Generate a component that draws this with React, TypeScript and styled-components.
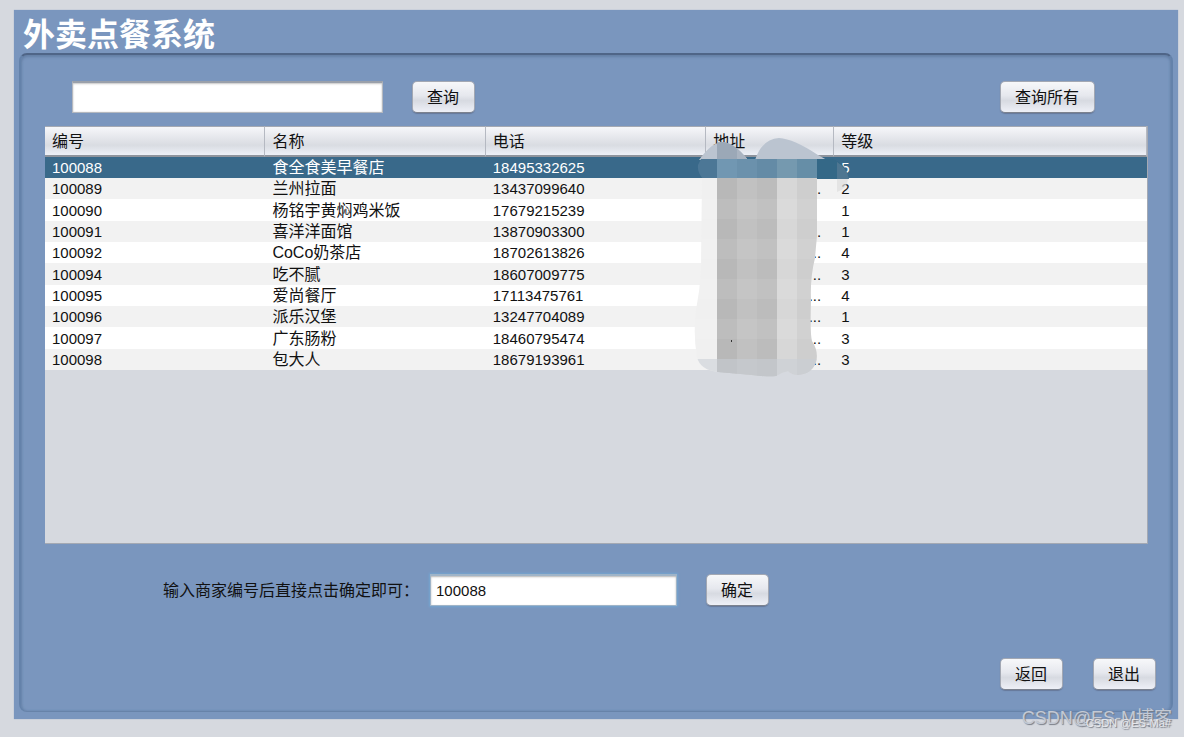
import React, { useState } from "react";
import styled, { createGlobalStyle, css } from "styled-components";

const GlobalStyle = createGlobalStyle`
  * { box-sizing: border-box; }
  body {
    margin: 0;
    background: #d6d9df;
    color: #111;
    font: 16px/20px "Liberation Sans", "Noto Sans CJK SC", sans-serif;
  }
`;

const Page = styled.div`
  position: relative;
  min-height: 100vh;
  padding: 10px 6px 18px 14px;
  display: flex;
`;

const Window = styled.main`
  flex: 1;
  display: flex;
  flex-direction: column;
  padding: 0 5px 7px;
  background: #7a96be;
  box-shadow: 0 0 1px #8fa6ca;
`;

const Title = styled.h1`
  margin: 0;
  padding: 3px 4px 0;
  height: 43px;
  color: #fff;
  font-size: 32px;
  line-height: 44px;
  font-weight: 700;
`;

const Panel = styled.section`
  flex: 1;
  display: flex;
  flex-direction: column;
  padding: 26px 23px 21px 24px;
  border: 2px solid #6482aa;
  border-top-color: #4f6587;
  border-bottom: 1px solid #6783a9;
  border-radius: 8px;
  box-shadow: inset 0 2px 3px #6580a6, inset 1px 0 2px #6d89b0, inset -1px 0 2px #6d89b0;
`;

const Bar = styled.form`
  display: flex;
  align-items: center;
  height: 32px;
  gap: 29px;
`;

const SearchBar = styled(Bar)`
  padding: 0 53px 0 27px;
  margin-bottom: 13px;
`;

const ConfirmBar = styled(Bar)`
  margin-top: 30px;
  padding-left: 118px;
`;

const Field = styled.div`
  display: flex;
  align-items: center;
  gap: 11px;
`;

const ActionBar = styled.div`
  display: flex;
  justify-content: flex-end;
  gap: 30px;
  margin: auto -8px 0 0;
`;

const Label = styled.label`
  padding-top: 2px;
  white-space: nowrap;
`;

const TextBox = styled.input<{ $width: number; $active?: boolean }>`
  width: ${(p) => p.$width}px;
  height: 32px;
  padding: 0 5px;
  border: 1px solid #b4b8bf;
  border-top: 2px solid #9aa0aa;
  background: #fff;
  color: #111;
  font: 15px/20px "Liberation Sans", "Noto Sans CJK SC", sans-serif;
  box-shadow: inset 0 1px 2px #c8c8c8, inset 0 0 1px #b8b8b8;
  outline: none;
  ${(p) =>
    p.$active &&
    css`
      border-color: #9fb4c8;
      box-shadow: inset 0 1px 2px #b5b5b5, 0 0 2px 1px #73a4d1;
    `}
`;

const Button = styled.button<{ $end?: boolean }>`
  height: 32px;
  padding: 2px 15px 0 14px;
  border: 1px solid #a3a8b3;
  border-bottom-color: #7c828e;
  border-radius: 5px;
  background: linear-gradient(#f7f8fa, #e6e8ee 45%, #d7dae1 62%, #eef0f7);
  box-shadow: 0 1px 1px #66789a;
  color: #111;
  font: 16px/20px "Liberation Sans", "Noto Sans CJK SC", sans-serif;
  white-space: nowrap;
  ${(p) => p.$end && "margin-left: auto;"}
`;

const TableArea = styled.div`
  position: relative;
  height: 418px;
  background: #d6d9df;
  border: 1px solid #a4a9b3;
  border-top: 0;
  border-left: 0;
`;

const Table = styled.table`
  width: 100%;
  table-layout: fixed;
  border-collapse: separate;
  border-spacing: 0;
`;

const Col = styled.col<{ $share?: string }>`
  width: ${(p) => p.$share ?? "auto"};
`;

const HeadCell = styled.th`
  height: 31px;
  padding: 2px 7px 0;
  text-align: left;
  font-weight: 400;
  border-top: 1px solid #a4a9b3;
  border-bottom: 2px solid #8f949d;
  border-right: 1px solid #b5b9c2;
  background: linear-gradient(#f6f7fa, #e2e4e9 45%, #d9dce2 65%, #edf0f7);
`;

const Row = styled.tr<{ $selected: boolean }>`
  height: 21px;
  background: #fff;
  &:nth-child(even) { background: #f2f2f2; }
  &:nth-child(3n) { height: 22px; }
  ${(p) => p.$selected && "background: #39698a; color: #fff;"}
`;

const Cell = styled.td<{ $numeric?: boolean }>`
  padding: 1px 8px 0 7px;
  line-height: 20px;
  font-size: ${(p) => (p.$numeric ? 15 : 16)}px;
  white-space: nowrap;
  overflow: hidden;
`;

const AddressCell = styled(Cell)`
  text-align: right;
  padding-right: 13px;
`;

const Mosaic = styled.svg`
  position: absolute;
  left: 645px;
  top: 4px;
  width: 170px;
  height: 257px;
`;

const Watermark = styled.div<{ $small?: boolean }>`
  position: absolute;
  right: ${(p) => (p.$small ? 13 : 12)}px;
  bottom: ${(p) => (p.$small ? 4 : 8)}px;
  color: ${(p) => (p.$small ? "#e6e8ec" : "#c3c9d4")};
  font-size: ${(p) => (p.$small ? 11 : 18)}px;
  line-height: ${(p) => (p.$small ? 20 : 22)}px;
  text-shadow: 1px 1px 1px #777c86;
  white-space: nowrap;
`;

const shops = [
  ["100088", "食全食美早餐店", "18495332625", "5", ""],
  ["100089", "兰州拉面", "13437099640", "2", "."],
  ["100090", "杨铭宇黄焖鸡米饭", "17679215239", "1", ""],
  ["100091", "喜洋洋面馆", "13870903300", "1", "."],
  ["100092", "CoCo奶茶店", "18702613826", "4", ".."],
  ["100094", "吃不腻", "18607009775", "3", ".."],
  ["100095", "爱尚餐厅", "17113475761", "4", "..."],
  ["100096", "派乐汉堡", "13247704089", "1", "..."],
  ["100097", "广东肠粉", "18460795474", "3", ".."],
  ["100098", "包大人", "18679193961", "3", ".."],
];

const columns = [
  { color: "#f0f0f0", x: 690, w: 27 },
  { color: "#b8b8b8", x: 717, w: 20 },
  { color: "#c1c1c1", x: 737, w: 20 },
  { color: "#bcbcbc", x: 757, w: 20 },
  { color: "#d7d7d7", x: 777, w: 20 },
  { color: "#cecece", x: 797, w: 22 },
];

function AddressMosaic() {
  return (
    <Mosaic viewBox="690 130 170 257" aria-hidden="true">
      <defs>
        <clipPath id="stroke">
          <path d="M702 178H817V236Q816 246 815 258Q810 278 811 300Q810 335 812 341Q819 352 816 362Q812 374 798 375Q792 375 788 371Q782 372 776 376Q768 377 752 375L718 372Q700 370 697 357Q693 335 696 310Q700 290 701 270Z" />
        </clipPath>
        <clipPath id="humps">
          <path d="M699 160Q712 142 722 142Q734 142 748 160H755Q762 139 779 138Q794 139 818 155L827 160Z" />
        </clipPath>
      </defs>
      <g clipPath="url(#humps)">
        <path fill="#bbc4d0" d="M690 130h140v30H690z" />
        <path fill="#9ba8b7" d="M717 130h20v30h-20z" />
        <path fill="#aab4c1" d="M737 130h17v30h-17z" />
      </g>
      <path fill="#4c7796" d="M701 159H817V179H703Q697 172 698 165Z" />
      <path fill="#7197b2" d="M717 159h20v20h-20z" />
      <path fill="#6b91ac" d="M737 159h20v20h-20z" />
      <path fill="#648ba6" d="M757 159h20v20h-20z" />
      <path fill="#7599af" d="M777 159h20v20h-20z" />
      <path fill="#668ea7" d="M797 159h20v20h-20z" />
      <path fill="#346887" d="M817 159H832Q845 162 849 179H817Z" />
      <path fill="#608097" fillOpacity=".6" d="M837 162Q847 168 849 179H837Z" />
      <path fill="#dedede" fillOpacity=".7" d="M837 179H848Q847 189 837 192Z" />
      <g clipPath="url(#stroke)">
        {columns.map((c) => (
          <rect key={c.x} x={c.x} y="178" width={c.w} height="200" fill={c.color} />
        ))}
        <path fill="#fff" fillOpacity=".08" d="M690 199h130v20H690zM690 239h130v20H690zM690 279h130v20H690zM690 319h130v20H690z" />
        <path fill="#c9cdd5" fillOpacity=".55" d="M690 359h130v20H690z" />
      </g>
      <path fill="#333" d="M731 340h1v2h-1z" />
    </Mosaic>
  );
}

export default function App() {
  const [selected, setSelected] = useState("100088");
  return (
    <>
      <GlobalStyle />
      <Page>
        <Window>
          <Title>外卖点餐系统</Title>
          <Panel>
            <SearchBar onSubmit={(e) => e.preventDefault()}>
              <TextBox $width={311} aria-label="查询" />
              <Button>查询</Button>
              <Button type="button" $end>查询所有</Button>
            </SearchBar>
            <TableArea>
              <Table>
                <colgroup>
                  <Col $share="20%" />
                  <Col $share="20%" />
                  <Col $share="20%" />
                  <Col $share="128px" />
                  <Col />
                </colgroup>
                <thead>
                  <tr>
                    {["编号", "名称", "电话", "地址", "等级"].map((h) => (
                      <HeadCell key={h} scope="col">{h}</HeadCell>
                    ))}
                  </tr>
                </thead>
                <tbody>
                  {shops.map(([id, name, phone, level, dots]) => (
                    <Row key={id} $selected={id === selected} onClick={() => setSelected(id)}>
                      <Cell $numeric>{id}</Cell>
                      <Cell>{name}</Cell>
                      <Cell $numeric>{phone}</Cell>
                      <AddressCell $numeric>{dots}</AddressCell>
                      <Cell $numeric>{level}</Cell>
                    </Row>
                  ))}
                </tbody>
              </Table>
              <AddressMosaic />
            </TableArea>
            <ConfirmBar onSubmit={(e) => e.preventDefault()}>
              <Field>
                <Label htmlFor="shop">输入商家编号后直接点击确定即可：</Label>
                <TextBox
                  id="shop"
                  $width={247}
                  $active
                  value={selected}
                  onChange={(e) => setSelected(e.target.value)}
                />
              </Field>
              <Button>确定</Button>
            </ConfirmBar>
            <ActionBar>
              <Button type="button">返回</Button>
              <Button type="button">退出</Button>
            </ActionBar>
          </Panel>
        </Window>
        <Watermark>CSDN@ES-M博客</Watermark>
        <Watermark $small>CSDN @ES-Ma#</Watermark>
      </Page>
    </>
  );
}
